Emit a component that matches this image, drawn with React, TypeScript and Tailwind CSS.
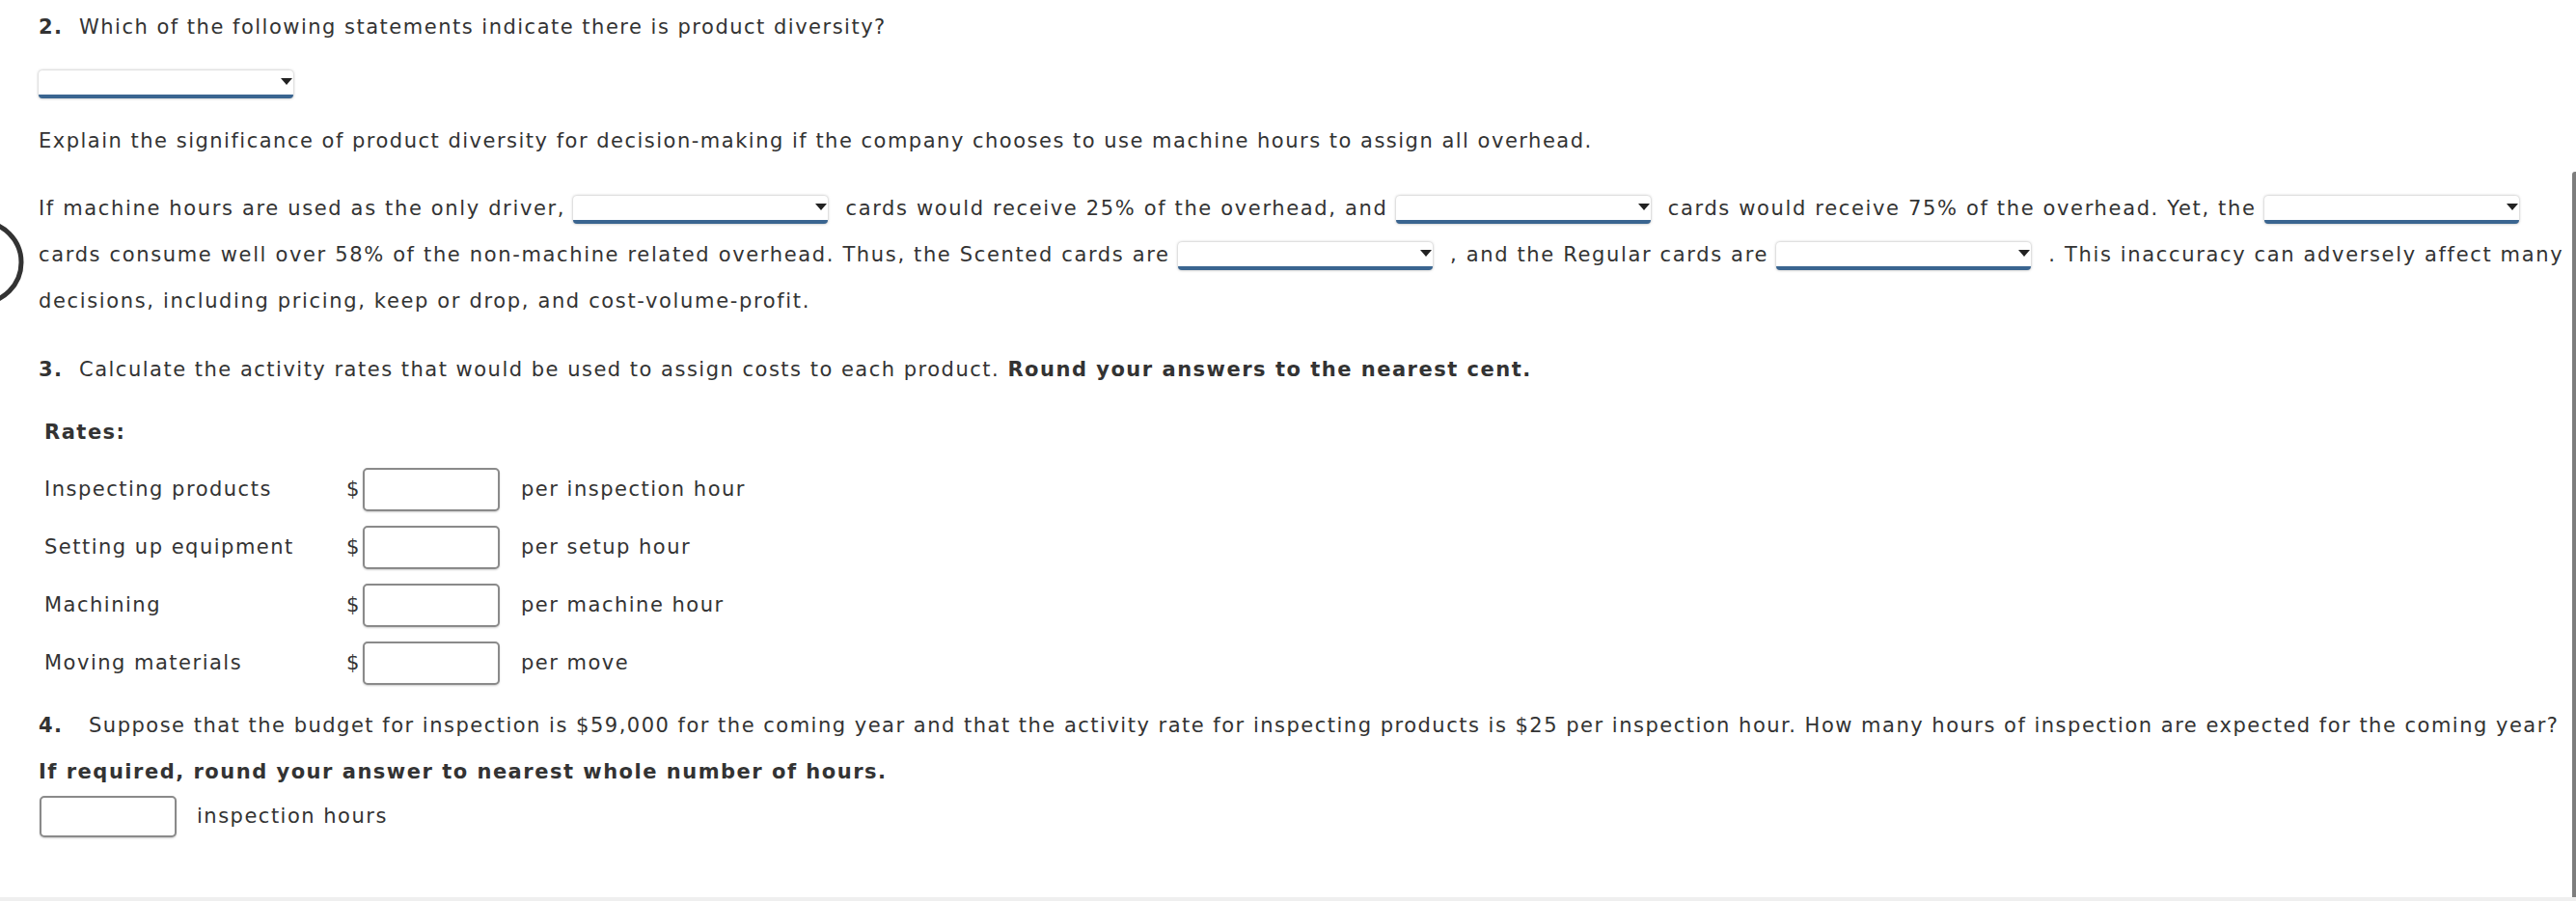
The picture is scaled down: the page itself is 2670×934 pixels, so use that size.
import React from 'react';

function Dropdown({ block = false }: { block?: boolean }) {
    return (
        <span
            className={`${block ? 'flex' : 'inline-flex align-middle mr-[18px]'} w-[264px] h-[29px] justify-end items-start pt-[8px] pr-[1px] bg-white rounded-[4px] border-b-4 border-[#3a6590] shadow-[0_0_3px_rgba(0,0,0,0.35)]`}
        >
            <svg width="12" height="7" viewBox="0 0 12 7">
                <polygon points="0,0 12,0 6,7" fill="#222" />
            </svg>
        </span>
    );
}

function AnswerBox({ tall = true }: { tall?: boolean }) {
    return (
        <div
            className={`${tall ? 'h-[45px]' : 'h-[43px]'} w-[142px] bg-white border-2 border-[#8a8a8a] rounded-[5px] shadow-[0_1px_2px_rgba(0,0,0,0.2)]`}
        />
    );
}

const rates = [
    { label: 'Inspecting products', unit: 'per inspection hour' },
    { label: 'Setting up equipment', unit: 'per setup hour' },
    { label: 'Machining', unit: 'per machine hour' },
    { label: 'Moving materials', unit: 'per move' },
];

export default function App() {
    return (
        <div
            className="relative w-[2670px] h-[934px] overflow-hidden bg-white text-[#333] text-[21px] tracking-[1.5px] flex flex-col"
            style={{ fontFamily: '"DejaVu Sans", Verdana, sans-serif' }}
        >
            <div className="flex flex-1">
                <div className="flex-1 pl-[40px]">
                    {/* Question 2 */}
                    <div className="mt-[13px] leading-[30px] whitespace-nowrap">
                        <span className="inline-block w-[42px] font-bold">2.</span>
                        Which of the following statements indicate there is product diversity?
                    </div>
                    <div className="mt-[30px]">
                        <Dropdown block />
                    </div>
                    <div className="mt-[29px] leading-[30px] whitespace-nowrap">
                        Explain the significance of product diversity for decision-making if the company chooses to use machine hours to assign all overhead.
                    </div>
                    <p className="mt-[31px] leading-[48px] whitespace-nowrap tracking-[1.65px]">
                        If machine hours are used as the only driver, <Dropdown />cards would receive 25% of the overhead, and <Dropdown />cards would receive 75% of the overhead. Yet, the <Dropdown />
                        <br />
                        cards consume well over 58% of the non-machine related overhead. Thus, the Scented cards are <Dropdown />, and the Regular cards are <Dropdown />. This inaccuracy can adversely affect many
                        <br />
                        decisions, including pricing, keep or drop, and cost-volume-profit.
                    </p>

                    {/* Question 3 */}
                    <div className="mt-[32px] leading-[30px] whitespace-nowrap">
                        <span className="inline-block w-[42px] font-bold">3.</span>
                        Calculate the activity rates that would be used to assign costs to each product. <span className="font-bold">Round your answers to the nearest cent.</span>
                    </div>
                    <div className="pl-[6px]">
                        <div className="mt-[35px] leading-[30px] font-bold">Rates:</div>
                        <div className="mt-[22px] flex flex-col gap-[15px]">
                            {rates.map((r) => (
                                <div key={r.label} className="flex items-center h-[45px]">
                                    <span className="w-[313px]">{r.label}</span>
                                    <span className="w-[17px]">$</span>
                                    <AnswerBox />
                                    <span className="pl-[22px]">{r.unit}</span>
                                </div>
                            ))}
                        </div>
                    </div>

                    {/* Question 4 */}
                    <div className="mt-[27px] leading-[30px] whitespace-nowrap">
                        <span className="inline-block w-[52px] font-bold">4.</span>
                        Suppose that the budget for inspection is $59,000 for the coming year and that the activity rate for inspecting products is $25 per inspection hour. How many hours of inspection are expected for the coming year?
                    </div>
                    <div className="mt-[18px] leading-[30px] font-bold whitespace-nowrap">
                        If required, round your answer to nearest whole number of hours.
                    </div>
                    <div className="mt-[10px] flex items-center gap-[21px] pl-[1px]">
                        <AnswerBox tall={false} />
                        <span>inspection hours</span>
                    </div>
                </div>
                <div className="w-[4px] pt-[178px] flex">
                    <div className="flex-1 bg-[#7d7d7d] rounded-tl-[3px]" />
                </div>
            </div>
            <div className="h-[4px] bg-[#efefef]" />

            {/* partial ring at the left edge */}
            <svg className="absolute left-0 top-[225px]" width="30" height="95" viewBox="0 0 30 95">
                <circle cx="-20" cy="47" r="42" fill="none" stroke="#333" strokeWidth="5" />
            </svg>
        </div>
    );
}
